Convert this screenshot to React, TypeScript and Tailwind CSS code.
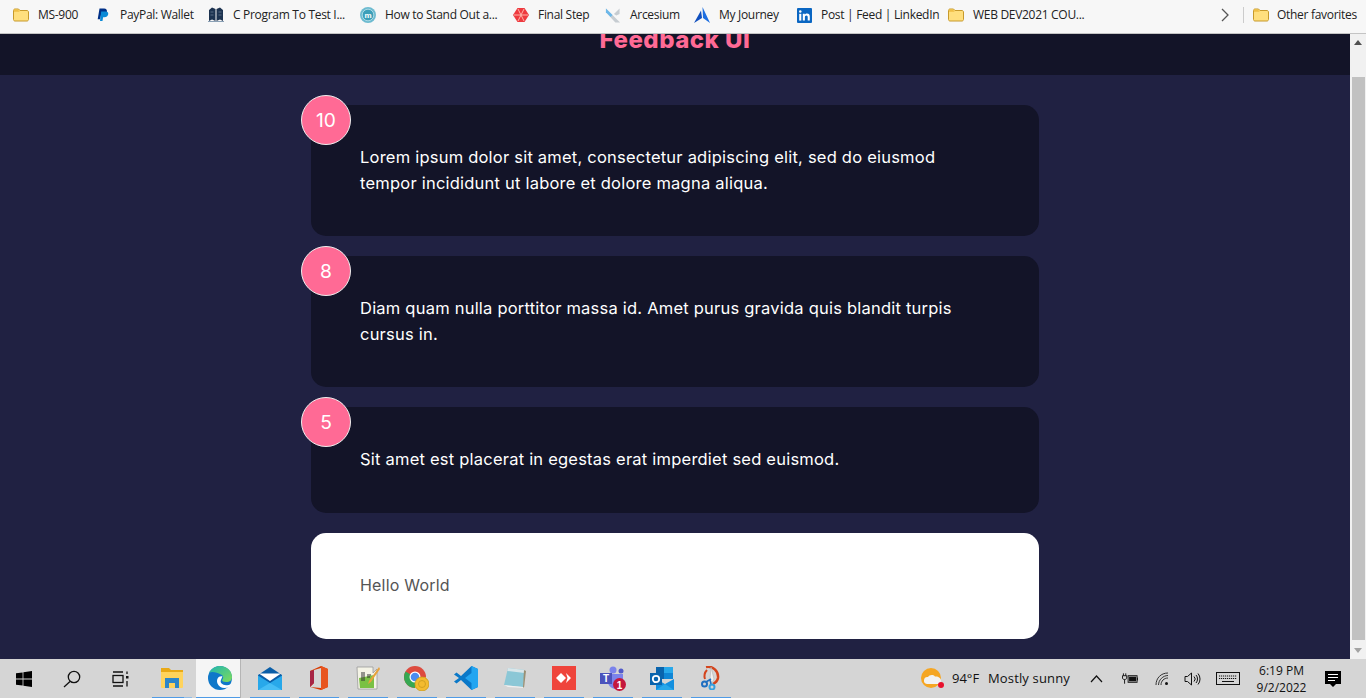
import React from "react";

const Folder = () => (
  <svg width="16" height="16" viewBox="0 0 16 16">
    <path d="M.5 3.500c0-.8.6-1.500 1.500-1.500h3.500l1.500 1.500h7c.8 0 1.500.7 1.500 1.500v7.500c0 .8-.7 1.500-1.500 1.500H2c-.9 0-1.500-.7-1.500-1.500z" fill="#ffdf7e" stroke="#c79a2c" />
    <path d="M1 4.800h5l1.500-1.300H5.500L4.800 2.500H2L1 3.300z" fill="#f0bf45" />
  </svg>
);
const PayPal = () => (
  <svg width="16" height="16" viewBox="0 0 16 16">
    <path d="M4.500 1.500h4.600c2.200 0 3.200 1.300 2.800 3.200-.4 2.100-2 3.200-4.200 3.200H6l-.8 4.400H2.700z" fill="#003087" />
    <path d="M6.200 4.500h4.500c1.900 0 2.800 1 2.500 2.800-.4 1.900-1.800 3-3.800 3H8.100l-.6 3.700H5z" fill="#0a8ad6" />
  </svg>
);
const Book = () => (
  <svg width="16" height="16" viewBox="0 0 16 16">
    <path d="M1 3l3-2.500L7.500 2v12L4 12.500 1 14z" fill="#1d3350" />
    <path d="M15 3l-3-2.500L8.500 2v12l3.500-1.500 3 1.500z" fill="#1d3350" />
    <path d="M2.500 5h3M2.500 8h3M10.500 5h3M10.500 8h3" stroke="#7f93a8" strokeWidth=".6" />
    <path d="M0 14.500h16" stroke="#8aa0b5" strokeWidth="1" />
  </svg>
);
const MCircle = () => (
  <svg width="16" height="16" viewBox="0 0 16 16">
    <circle cx="8" cy="8" r="8" fill="#6dbbd0" />
    <circle cx="8" cy="8" r="5.800" fill="#3c9fb9" stroke="#bfe3ec" strokeWidth=".8" />
    <text x="8" y="10.800" textAnchor="middle" fontSize="8" fontWeight="700" fill="#fff" fontFamily="Liberation Sans, sans-serif">m</text>
  </svg>
);
const FinalStep = () => (
  <svg width="16" height="16" viewBox="0 0 16 16">
    <path d="M4.500 1h7L16 8l-4.500 7h-7L0 8z" fill="#ee3a3f" />
    <path d="M5 2l6 12M11 2L5 14M1 8h14" stroke="#ffb3a8" strokeWidth="1" />
  </svg>
);
const Arcesium = () => (
  <svg width="17" height="17" viewBox="0 0 17 17">
    <path d="M1 1l15 15H11L1 5z" fill="#c6ccd1" />
    <path d="M1 1l7 7-2 2L1 5z" fill="#6cb8ea" />
    <path d="M15.500 1v6l-3.500 1.500L9.500 7z" fill="#c6ccd1" />
  </svg>
);
const Journey = () => (
  <svg width="16" height="16" viewBox="0 0 16 16">
    <path d="M8.500 0L16 16l-7-5z" fill="#1c6ee0" />
    <path d="M7 3.500L0 16l8-5z" fill="#0f4fbe" />
  </svg>
);
const LinkedIn = () => (
  <svg width="15" height="15" viewBox="0 0 15 15">
    <rect width="15" height="15" rx="1" fill="#0a66c2" />
    <rect x="2.200" y="5.800" width="2.100" height="6.800" fill="#fff" />
    <circle cx="3.250" cy="3.500" r="1.250" fill="#fff" />
    <path d="M5.800 5.800h2v1c.4-.7 1.200-1.200 2.200-1.200 2 0 2.800 1.200 2.800 3.200v3.800h-2.100V9.200c0-1-.3-1.800-1.300-1.800s-1.500.8-1.500 1.800v3.400H5.800z" fill="#fff" />
  </svg>
);

const bookmarks: { icon: React.ReactNode; label: string; w: string }[] = [
  { icon: <Folder />, label: "MS-900", w: "w-[82px]" },
  { icon: <PayPal />, label: "PayPal: Wallet", w: "w-[113px]" },
  { icon: <Book />, label: "C Program To Test I...", w: "w-[152px]" },
  { icon: <MCircle />, label: "How to Stand Out a...", w: "w-[153px]" },
  { icon: <FinalStep />, label: "Final Step", w: "w-[92px]" },
  { icon: <Arcesium />, label: "Arcesium", w: "w-[89px]" },
  { icon: <Journey />, label: "My Journey", w: "w-[102px]" },
  { icon: <LinkedIn />, label: "Post | Feed | LinkedIn", w: "w-[152px]" },
  { icon: <Folder />, label: "WEB DEV2021 COU...", w: "w-[151px]" },
];

const feedback = [
  { rating: 10, text: "Lorem ipsum dolor sit amet, consectetur adipiscing elit, sed do eiusmod tempor incididunt ut labore et dolore magna aliqua." },
  { rating: 8, text: "Diam quam nulla porttitor massa id. Amet purus gravida quis blandit turpis cursus in." },
  { rating: 5, text: "Sit amet est placerat in egestas erat imperdiet sed euismod." },
];

const Explorer = () => (
  <svg width="22" height="20" viewBox="0 0 22 20">
    <path d="M0 0h8l2 2h12v4H0z" fill="#e9a916" />
    <path d="M0 4h22v15a1 1 0 0 1-1 1H1a1 1 0 0 1-1-1z" fill="#ffd35c" />
    <path d="M4 10h14v10h-4v-5H8v5H4z" fill="#2e86c9" />
  </svg>
);
const Edge = () => (
  <svg width="24" height="24" viewBox="0 0 24 24">
    <defs>
      <linearGradient id="edg" x1="0" y1="0" x2="1" y2="1">
        <stop offset="0" stopColor="#1fb5b0" />
        <stop offset="1" stopColor="#7fdc5a" />
      </linearGradient>
    </defs>
    <circle cx="12" cy="12" r="12" fill="#0f78c9" />
    <path d="M1 7C4 1 9 0 12 0c7 0 12 5 12 11 0 3-2 5-6 5-2.500 0-4-1-4-2 1.500-1.500 2-4-1-5.500C9 6.500 4 5 1 7z" fill="url(#edg)" />
    <path d="M14.500 10.500c-4-1-6.500 3-5 7 1 2.500 3.500 4.500 7 4.500 3 0 5.500-1.500 6.500-4-2 1-5 1.800-7.500.8-2.500-1-3.500-3-2.500-5 .5-1 1-2.500 1.500-3.300z" fill="#fff" />
  </svg>
);
const Mail = () => (
  <svg width="24" height="23" viewBox="0 0 24 23">
    <path d="M12 0l12 8v15H0V8z" fill="#0a5ea8" />
    <path d="M1 6.500h22L12 14z" fill="#fff" />
    <path d="M0 8.500L12 16 24 8.500V22a1 1 0 0 1-1 1H1a1 1 0 0 1-1-1z" fill="#28a8ea" />
    <path d="M0 23l12-7 12 7z" fill="#45bdf5" />
  </svg>
);
const Office = () => (
  <svg width="18" height="24" viewBox="0 0 18 24">
    <path d="M11 0l7 3v18l-7 3-11-3 11 1V2L4 4v13l-4 4V5z" fill="#d83b01" />
    <path d="M0 5l4-1v13l-4 4z" fill="#a72545" />
    <path d="M11 0l7 3v18l-7 3z" fill="#e8551f" />
  </svg>
);
const Sheet = () => (
  <svg width="24" height="24" viewBox="0 0 24 24">
    <path d="M1 1h16v6l4-4v20H2z" fill="#f4f3e6" stroke="#999" strokeWidth=".8" />
    <path d="M3 12l15-3v13H4z" fill="#7ac143" />
    <path d="M6 6v9M8 6v9M11 9h4M11 11h3" stroke="#333" strokeWidth="1" />
    <path d="M23 1L13 15l-1 3 3-2L24 3z" fill="#e8a33c" />
  </svg>
);
const Chrome = () => (
  <svg width="25" height="25" viewBox="0 0 25 25">
    <circle cx="11" cy="11" r="11" fill="#dd4b3e" />
    <path d="M11 11L1.500 5.500A11 11 0 0 0 11 22z" fill="#36a852" />
    <path d="M11 11h10.800A11 11 0 0 1 11 22z" fill="#fbc02d" />
    <circle cx="11" cy="11" r="5.500" fill="#fff" />
    <circle cx="11" cy="11" r="4.300" fill="#4a8cf0" />
    <circle cx="18" cy="18" r="7" fill="#f3bb2e" stroke="#c99a1d" strokeWidth=".8" />
    <circle cx="18" cy="18" r="3.500" fill="none" stroke="#c99a1d" strokeWidth=".8" />
  </svg>
);
const VSCode = () => (
  <svg width="24" height="24" viewBox="0 0 24 24">
    <path d="M17.500 0L24 3v18l-6.500 3L7 14l-4.500 3.500L0 15.500 5 12 0 8.500l2.500-2L7 10z" fill="#0a78c8" />
    <path d="M17.500 0L24 3v18l-6.500 3V17L11 12l6.500-5z" fill="#22a5f1" />
  </svg>
);
const Notepad = () => (
  <svg width="23" height="22" viewBox="0 0 23 22">
    <path d="M5 1l17 2-2 17L1 18z" fill="#8bc7d6" />
    <path d="M5 1l17 2-.4 3L4.300 4z" fill="#d8e6ea" />
    <path d="M1 18l19 2 2 1-17-1z" fill="#f0f0f0" />
    <path d="M21 3l2 1-2 17-1-1z" fill="#9a8f73" />
  </svg>
);
const AnyDesk = () => (
  <svg width="24" height="24" viewBox="0 0 24 24">
    <rect width="24" height="24" fill="#ef443b" />
    <path d="M9 7l5 5-5 5-5-5z" fill="#fff" />
    <path d="M14 7l5 5-5 5 1.500-5z" fill="#fff" />
  </svg>
);
const Teams = () => (
  <svg width="26" height="25" viewBox="0 0 26 25">
    <circle cx="13" cy="4" r="3.500" fill="#7b83eb" />
    <circle cx="21" cy="5" r="2.500" fill="#5059c9" />
    <path d="M8 8h15v8c0 4-3 7-7 7s-8-3-8-7z" fill="#7b83eb" />
    <rect y="7" width="12" height="11" fill="#4b53bc" />
    <text x="6" y="16" textAnchor="middle" fontSize="10" fontWeight="700" fill="#fff" fontFamily="Liberation Sans, sans-serif">T</text>
    <circle cx="19.500" cy="18.500" r="6.500" fill="#c4173c" />
    <text x="19.500" y="22.500" textAnchor="middle" fontSize="10" fontWeight="700" fill="#fff" fontFamily="Liberation Sans, sans-serif">1</text>
  </svg>
);
const Outlook = () => (
  <svg width="24" height="23" viewBox="0 0 24 23">
    <rect x="6" y="0" width="17" height="12" fill="#0a64ad" />
    <rect x="14" y="0" width="9" height="6" fill="#28a8ea" />
    <rect x="14" y="6" width="9" height="6" fill="#0f86d6" />
    <path d="M6 12l9 5 9-5v11H6z" fill="#1490df" />
    <path d="M6 23l9-6 9 6z" fill="#28a8ea" />
    <rect y="6" width="12" height="12" fill="#0a64ad" />
    <circle cx="6" cy="12" r="3.200" fill="none" stroke="#fff" strokeWidth="1.800" />
  </svg>
);
const Snip = () => (
  <svg width="20" height="24" viewBox="0 0 20 24">
    <path d="M5 1a10 10 0 0 1 12 11c-.5 3-3 5-5 6" fill="none" stroke="#d4441c" strokeWidth="2.500" />
    <path d="M6 4a9 9 0 0 0-2 9" fill="none" stroke="#d4441c" strokeWidth="2" />
    <path d="M10 1l3 12-2 4-2-4z" fill="#f0f0f0" stroke="#aaa" strokeWidth=".5" />
    <circle cx="3.500" cy="18" r="2.500" fill="none" stroke="#1f6fc0" strokeWidth="2" />
    <circle cx="11" cy="21" r="2.500" fill="none" stroke="#35a0e0" strokeWidth="2" />
    <path d="M5 16l5-3M10 18l-1-4" stroke="#1f6fc0" strokeWidth="1.500" />
  </svg>
);

const apps: { icon: React.ReactNode; key: string }[] = [
  { key: "explorer", icon: <Explorer /> },
  { key: "edge", icon: <Edge /> },
  { key: "mail", icon: <Mail /> },
  { key: "office", icon: <Office /> },
  { key: "sheet", icon: <Sheet /> },
  { key: "chrome", icon: <Chrome /> },
  { key: "vscode", icon: <VSCode /> },
  { key: "notepad", icon: <Notepad /> },
  { key: "anydesk", icon: <AnyDesk /> },
  { key: "teams", icon: <Teams /> },
  { key: "outlook", icon: <Outlook /> },
  { key: "snip", icon: <Snip /> },
];

export default function App() {
  return (
    <div className="flex h-[698px] w-[1366px] flex-col overflow-hidden bg-[#202142] font-['Inter',sans-serif]">
      {/* bookmarks bar */}
      <div className="flex h-[34px] shrink-0 items-center border-b border-[#c4c4c4] bg-[#f7f7f7] pb-[3px] pl-[13px] font-['Open_Sans',sans-serif] text-[12px] tracking-[-0.3px] text-[#222]">
        {bookmarks.map((b) => (
          <div key={b.label} className={`flex shrink-0 items-center gap-[9px] ${b.w}`}>
            <span className="flex w-[16px] shrink-0 justify-center">{b.icon}</span>
            <span className="whitespace-nowrap">{b.label}</span>
          </div>
        ))}
        <div className="ml-[117px] flex w-[18px] shrink-0 justify-center">
          <svg width="10" height="14" viewBox="0 0 10 14"><path d="M2 1l6 6-6 6" fill="none" stroke="#555" strokeWidth="1.300" /></svg>
        </div>
        <div className="ml-[9px] h-[16px] w-px shrink-0 bg-[#ccc]" />
        <div className="ml-[9px] flex shrink-0 items-center gap-[8px]">
          <Folder />
          <span className="whitespace-nowrap">Other favorites</span>
        </div>
      </div>

      {/* page + scrollbar */}
      <div className="flex min-h-0 flex-1">
        <div className="flex min-w-0 flex-1 flex-col overflow-hidden">
          <header className="flex h-[41px] shrink-0 justify-center overflow-hidden bg-[#131428]">
            <h2 className="-mt-[9px] text-[24px] leading-[30px] font-extrabold tracking-[0.5px] text-[#ff6a95]">Feedback UI</h2>
          </header>
          <main className="mx-auto flex w-[728px] flex-col gap-[20px] pt-[30px] text-[16px] leading-[25.6px]">
            {feedback.map((f) => (
              <div key={f.rating} className="relative rounded-[15px] bg-[#131428] py-[40px] pr-[60px] pl-[49px] text-[16.5px] leading-[25.6px] font-normal tracking-[0.22px] text-white">
                <div className="absolute -top-[10px] -left-[10px] flex h-[50px] w-[50px] items-center justify-center rounded-full border border-[#eee] bg-[#ff6a95] pt-[1px] text-[19.2px] font-normal tracking-normal">
                  {f.rating}
                </div>
                <p>{f.text}</p>
              </div>
            ))}
            <div className="rounded-[15px] bg-white py-[40px] pr-[50px] pl-[49px] tracking-[0.2px] text-[#555]">Hello World</div>
          </main>
        </div>
        <div className="flex w-[16px] shrink-0 flex-col items-center bg-[#f1f1f1]">
          <div className="flex h-[17px] shrink-0 items-center justify-center">
            <svg width="8" height="5" viewBox="0 0 8 5"><path d="M4 0l4 5H0z" fill="#505050" /></svg>
          </div>
          <div className="mt-[26px] h-[563px] w-[13px] shrink-0 bg-[#c1c1c1]" />
          <div className="mt-auto flex h-[17px] shrink-0 items-center justify-center">
            <svg width="8" height="5" viewBox="0 0 8 5"><path d="M4 5l4-5H0z" fill="#a3a3a3" /></svg>
          </div>
        </div>
      </div>

      {/* taskbar */}
      <div className="flex h-[39px] shrink-0 items-center bg-[#d5d5d5] font-['Open_Sans',sans-serif] text-[#111]">
        <div className="flex h-full w-[48px] shrink-0 items-center justify-center">
          <svg width="16" height="16" viewBox="0 0 16 16" fill="#000">
            <path d="M0 2.300l6.600-.9v6.200H0zM7.400 1.300L16 0v7.600H7.400zM0 8.400h6.600v6.200L0 13.700zM7.400 8.400H16V16l-8.600-1.200z" />
          </svg>
        </div>
        <div className="flex h-full w-[48px] shrink-0 items-center justify-center">
          <svg width="18" height="18" viewBox="0 0 18 18" fill="none" stroke="#111" strokeWidth="1.300">
            <circle cx="11" cy="7" r="5.700" />
            <path d="M7 11.500L1 17" />
          </svg>
        </div>
        <div className="flex h-full w-[48px] shrink-0 items-center justify-center">
          <svg width="17" height="16" viewBox="0 0 17 16" fill="none" stroke="#111" strokeWidth="1.300">
            <path d="M1 1h10M1 15h10" />
            <rect x="1" y="4.500" width="10" height="7" />
            <rect x="14" y="5" width="2.500" height="2.500" fill="#111" stroke="none" />
            <path d="M15 .500v2.500M15 10v5.500" />
          </svg>
        </div>
        <div className="w-[3px] shrink-0" />
        {apps.map((a) => (
          <div key={a.key} className="flex h-full w-[49px] shrink-0 flex-col items-center">
            {a.key === "edge" ? (
              <div className="mr-[4px] flex h-full w-[45px] flex-col border-r border-[#b5b5b5] bg-[#f5f5f5]">
                <div className="flex min-h-0 flex-1 items-center justify-center pl-[3px]">{a.icon}</div>
                <div className="h-px w-full shrink-0 bg-[#4f9be6]" />
              </div>
            ) : (
              <>
                <div className="flex min-h-0 flex-1 items-center justify-center">{a.icon}</div>
                {a.key === "explorer" ? (
                  <div className="flex h-px w-[40px] shrink-0">
                    <div className="w-[32px] bg-[#4f9be6]" />
                    <div className="flex-1 bg-[#93bde6]" />
                  </div>
                ) : (
                  <div className="h-px w-[40px] shrink-0 bg-[#4f9be6]" />
                )}
              </>
            )}
          </div>
        ))}
        <div className="ml-auto flex h-full items-center">
          <svg width="25" height="24" viewBox="0 0 25 24">
            <circle cx="10" cy="11" r="10" fill="#f5a623" />
            <path d="M6 17a3.500 3.500 0 0 1 1-7c1-2 5-3 7-.5 3-.5 6 1.500 6 4 0 2-1 3.500-3 3.500z" fill="#f2f2f2" />
            <circle cx="20" cy="18" r="3" fill="#e8112d" />
          </svg>
          <span className="ml-[6px] w-[36px] text-[13px]">94°F</span>
          <span className="w-[84px] text-[13px] tracking-[0.15px] whitespace-nowrap">Mostly sunny</span>
          <div className="ml-[16px] flex w-[16px] justify-center">
            <svg width="13" height="8" viewBox="0 0 13 8"><path d="M1 7l5.500-6L12 7" fill="none" stroke="#111" strokeWidth="1.200" /></svg>
          </div>
          <div className="ml-[18px] flex w-[16px] justify-center">
            <svg width="17" height="12" viewBox="0 0 17 12" fill="none" stroke="#111">
              <path d="M1.500 0v2.500M4 0v2.500M.5 2.500h4.500v2.500c0 1-1 1.500-2.250 1.500S.5 6 .5 5zM2.750 6.500v4.500" />
              <rect x="6.500" y="2.500" width="9.500" height="7" />
              <rect x="7.500" y="3.500" width="7.500" height="5" fill="#111" stroke="none" />
              <path d="M16.500 4.500v3" />
            </svg>
          </div>
          <div className="ml-[16px] flex w-[16px] justify-center">
            <svg width="14" height="14" viewBox="0 0 14 14" fill="none" stroke="#333" strokeWidth="1">
              <path d="M1 13C1 6 6 1 13 1M3.500 13c0-5 4.500-9.500 9.500-9.500M6 13c0-4 3-7 7-7" />
              <circle cx="11.500" cy="11.500" r="1.500" fill="#111" stroke="none" />
            </svg>
          </div>
          <div className="ml-[13px] flex w-[18px] justify-center">
            <svg width="17" height="14" viewBox="0 0 17 14" fill="none" stroke="#111">
              <path d="M1 4.500h2.500L7.500 1v12l-4-3.500H1z" />
              <path d="M10 4.500a3.500 3.500 0 0 1 0 5M12 3a6 6 0 0 1 0 8M14 1.500a8.500 8.500 0 0 1 0 11" />
            </svg>
          </div>
          <div className="ml-[15px] flex w-[24px] justify-center">
            <svg width="24" height="13" viewBox="0 0 24 13" fill="none" stroke="#111">
              <rect x=".5" y=".5" width="23" height="12" />
              <path d="M3 4h18M3 6.500h18" strokeDasharray="1.200 .8" />
              <path d="M6 9.500h12" />
            </svg>
          </div>
          <div className="ml-[12px] flex w-[59px] flex-col items-center text-[12px] leading-[17px]">
            <span>6:19 PM</span>
            <span>9/2/2022</span>
          </div>
          <div className="ml-[14px] flex w-[16px] justify-center">
            <svg width="16" height="16" viewBox="0 0 16 16">
              <path d="M0 0h16v13h-5l-3 3-3-3H0z" fill="#000" />
              <path d="M3 3.500h10M3 6.500h10M3 9.500h7" stroke="#fff" strokeWidth="1" />
            </svg>
          </div>
          <div className="w-[25px]" />
        </div>
      </div>
    </div>
  );
}
